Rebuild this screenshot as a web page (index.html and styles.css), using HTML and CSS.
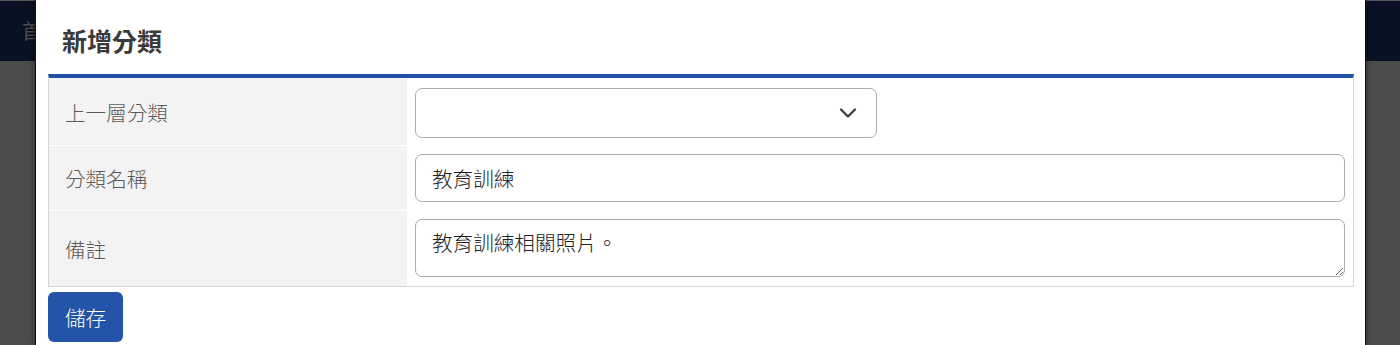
FILE: index.html
```html
<!DOCTYPE html>
<html lang="zh-Hant">
<head>
<meta charset="utf-8">
<title>新增分類</title>
<link rel="stylesheet" href="styles.css">
</head>
<body>
<div class="navbar"><span class="brand">首頁</span></div>
<div class="backdrop"></div>
<div class="modal">
  <div class="modal-header"><h2 class="modal-title">新增分類</h2></div>
  <div class="modal-body">
    <div class="form-table">
      <div class="label">上一層分類</div>
      <div class="field first">
        <div class="select">
          <svg class="chev" width="18" height="12" viewBox="0 0 18 12"><path d="M2 2.5 L9 9.5 L16 2.5" fill="none" stroke="#343a40" stroke-width="2.2" stroke-linecap="round" stroke-linejoin="round"/></svg>
        </div>
      </div>
      <div class="label">分類名稱</div>
      <div class="field"><input class="input" type="text" value="教育訓練"></div>
      <div class="label">備註</div>
      <div class="field last"><textarea class="textarea">教育訓練相關照片。</textarea></div>
    </div>
    <button class="btn">儲存</button>
  </div>
</div>
</body>
</html>
```
FILE: styles.css
```css
* { box-sizing: border-box; }
html, body { margin: 0; padding: 0; }
body {
  width: 1400px;
  height: 345px;
  overflow: hidden;
  background: #ffffff;
  font-family: "Noto Sans CJK TC", "Noto Sans", sans-serif;
  position: relative;
}
.navbar {
  height: 61px;
  background: #1e3a78;
  display: flex;
  align-items: center;
  padding-left: 22px;
}
.brand { color: #ffffff; font-size: 20px; }
.backdrop {
  position: absolute;
  inset: 0;
  background: rgba(0, 0, 0, 0.7);
  border-top: 1px solid #555;
}
.modal {
  position: absolute;
  top: 0;
  left: 35px;
  width: 1331px;
  height: 345px;
  background: #ffffff;
  border-left: 1px solid #111;
  border-right: 1px solid #111;
  box-shadow: 0 0 6px rgba(0,0,0,0.5);
}
.modal-header {
  padding: 22px 26px 0;
  height: 74px;
}
.modal-title {
  margin: 0;
  font-size: 25px;
  line-height: 36px;
  font-weight: 700;
  color: #3a3a3a;
}
.modal-body {
  padding: 0 11px 0 12px;
}
.form-table {
  display: grid;
  grid-template-columns: 358px 1fr;
  row-gap: 1px;
  border: 1px solid #d6d6d6;
  border-top: 4px solid #2151a3;
  background: #ffffff;
}
.label {
  background: #f3f3f3;
  color: #5a5a5a;
  font-size: 20.6px;
  font-weight: 300;
  padding-left: 16px;
  display: flex;
  align-items: center;
}
.field {
  padding: 8px;
  background: #ffffff;
}
.field.first { padding: 10px 8px 7px; }
.field.last { padding: 8px 8px 9px; }
.select {
  width: 462px;
  height: 50px;
  border: 1px solid #adadad;
  border-radius: 7px;
  display: flex;
  align-items: center;
  justify-content: flex-end;
  padding-right: 19px;
}
.input, .textarea {
  display: block;
  width: 100%;
  border: 1px solid #adadad;
  border-radius: 7px;
  font-family: "Noto Sans CJK TC", "Noto Sans", sans-serif;
  font-size: 20.6px;
  font-weight: 300;
  color: #222222;
  padding: 0 16px;
  background: #fff;
  outline: none;
}
.input { height: 48px; }
.textarea {
  height: 58px;
  padding-top: 9px;
  line-height: 27px;
  resize: vertical;
}
.btn {
  margin-top: 5px;
  height: 50px;
  padding: 0 17px;
  background: #2354a7;
  color: #ffffff;
  border: none;
  border-radius: 6px;
  font-family: "Noto Sans CJK TC", "Noto Sans", sans-serif;
  font-size: 20.6px;
  font-weight: 300;
  line-height: 50px;
}
```
